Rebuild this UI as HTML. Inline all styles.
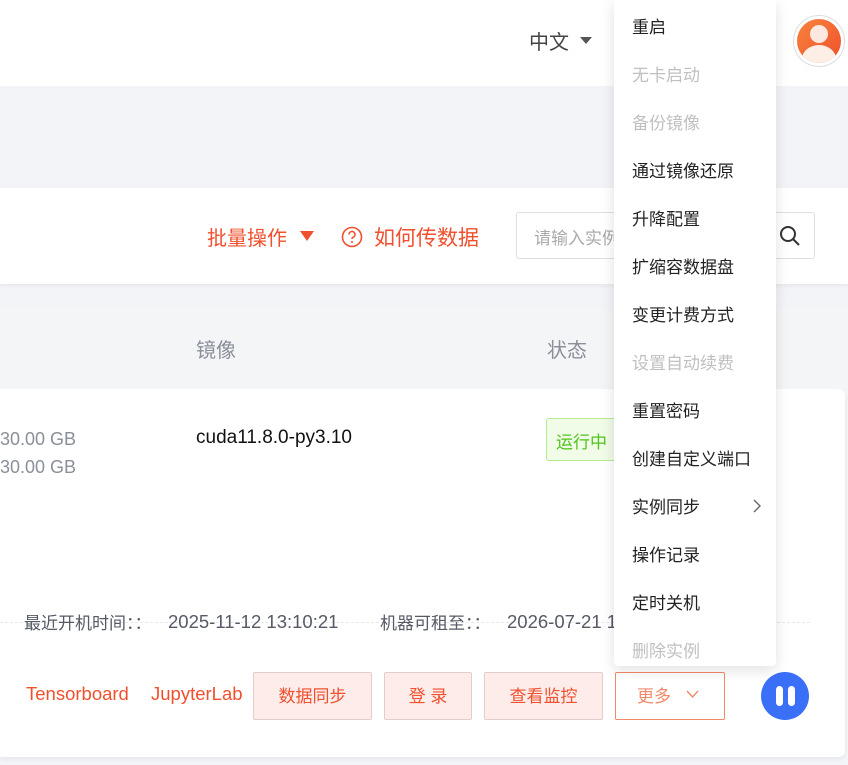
<!DOCTYPE html>
<html><head><meta charset="utf-8"><style>
*{margin:0;padding:0;box-sizing:border-box}
body{width:848px;height:765px;overflow:hidden;background:#f3f4f8;font-family:"Liberation Sans","Noto Sans CJK SC",sans-serif;position:relative;font-size:16px}
.abs{position:absolute}
.hdr{left:0;top:0;width:848px;height:86px;background:#fff}
.card{background:#fff}
.menu{left:614px;top:0;width:162px;height:666px;background:#fff;box-shadow:0 4px 14px rgba(0,0,0,.12);border-radius:0 0 4px 4px}
.mi{position:absolute;left:18px;font-size:17px;color:#222;white-space:nowrap}
.mi.d{color:#c0c0c0}
.btn{position:absolute;top:672px;height:48px;border:1px solid #e5cccc;background:#fdecea;color:#f0502d;font-size:17px;display:flex;align-items:center;justify-content:center;border-radius:2px;padding-bottom:3px}
</style></head><body>
<div class="abs hdr"></div>
<div class="abs" style="left:529px;top:26px;font-size:20px;color:#444">中文</div>
<div class="abs" style="left:580px;top:37px;width:0;height:0;border-left:6px solid transparent;border-right:6px solid transparent;border-top:7px solid #555"></div>
<div class="abs" style="left:793px;top:15px;width:52px;height:52px;border-radius:50%;border:1px solid #ddd;background:#fff"></div>
<div class="abs" style="left:797px;top:19px;width:44px;height:44px;border-radius:50%;background:linear-gradient(135deg,#f7843e,#ef4f2b);overflow:hidden">
<div class="abs" style="left:13px;top:6px;width:18px;height:18px;border-radius:50%;background:#fde8e0"></div>
<div class="abs" style="left:5px;top:26px;width:34px;height:28px;border-radius:50%;background:#fdeee6"></div></div>

<div class="abs card" style="left:0;top:188px;width:848px;height:96px;box-shadow:0 2px 4px rgba(0,0,0,.05)"></div>
<div class="abs" style="left:207px;top:222px;font-size:20px;color:#f0502d">批量操作</div>
<div class="abs" style="left:300px;top:231px;width:0;height:0;border-left:7px solid transparent;border-right:7px solid transparent;border-top:10px solid #f0502d"></div>
<svg class="abs" style="left:341px;top:226px" width="22" height="22" viewBox="0 0 22 22"><circle cx="11" cy="11" r="9.5" fill="none" stroke="#f0502d" stroke-width="1.6"/><path d="M8 8.5a3 3 0 1 1 4 2.8c-.8.4-1 .9-1 1.7" fill="none" stroke="#f0502d" stroke-width="1.6"/><circle cx="11" cy="16" r="1" fill="#f0502d"/></svg>
<div class="abs" style="left:374px;top:222px;font-size:21px;color:#f0502d">如何传数据</div>
<div class="abs" style="left:516px;top:212px;width:299px;height:47px;border:1px solid #dcdfe6;border-radius:3px;background:#fff"></div>
<div class="abs" style="left:534px;top:224px;font-size:17px;color:#aaa">请输入实例</div>
<svg class="abs" style="left:779px;top:225px" width="22" height="22" viewBox="0 0 22 22"><circle cx="9" cy="9" r="7" fill="none" stroke="#333" stroke-width="2"/><path d="M14 14l6 6" stroke="#333" stroke-width="2"/></svg>

<div class="abs" style="left:0;top:308px;width:848px;height:81px;background:#f4f5f7"></div>
<div class="abs" style="left:196px;top:334px;font-size:20px;color:#8a8f99">镜像</div>
<div class="abs" style="left:547px;top:334px;font-size:20px;color:#8a8f99">状态</div>

<div class="abs card" style="left:0;top:389px;width:845px;height:368px;border-radius:0 6px 6px 0;box-shadow:0 2px 4px rgba(0,0,0,.06)"></div>
<div class="abs" style="left:0;top:425px;font-size:18px;color:#8a8f99;line-height:28px">30.00 GB<br>30.00 GB</div>
<div class="abs" style="left:196px;top:427px;font-size:19px;color:#111">cuda11.8.0-py3.10</div>
<div class="abs" style="left:546px;top:418px;width:80px;height:43px;border:1px solid #b7eb8f;background:#f0fbe8;border-radius:3px;color:#52c41a;font-size:17px;padding:9px 0 0 9px">运行中</div>
<div class="abs" style="left:0;top:622px;width:810px;border-top:1px dashed #e8e8e8"></div>
<div class="abs" style="left:24px;top:609px;font-size:17px;color:#555a66;white-space:nowrap">最近开机时间：：</div>
<div class="abs" style="left:168px;top:611px;font-size:18.5px;color:#555a66;white-space:nowrap">2025-11-12 13:10:21</div>
<div class="abs" style="left:380px;top:609px;font-size:17px;color:#555a66;white-space:nowrap">机器可租至：：</div>
<div class="abs" style="left:507px;top:611px;font-size:18.5px;color:#555a66;white-space:nowrap">2026-07-21 1</div>
<div class="abs" style="left:26px;top:683px;font-size:18.5px;color:#f0502d">Tensorboard</div>
<div class="abs" style="left:151px;top:683px;font-size:18.5px;color:#f0502d">JupyterLab</div>
<div class="btn" style="left:253px;width:119px">数据同步</div>
<div class="btn" style="left:384px;width:88px">登 录</div>
<div class="btn" style="left:484px;width:119px">查看监控</div>
<div class="btn" style="left:615px;width:110px;background:#fff;border-color:#f08a6a;color:#f08a6a"></div>
<div class="abs" style="left:761px;top:672px;width:48px;height:48px;border-radius:50%;background:#3a6ff7"></div>
<div class="abs" style="left:776px;top:686px;width:7px;height:20px;background:#fff;border-radius:4px"></div>
<div class="abs" style="left:788px;top:686px;width:7px;height:20px;background:#fff;border-radius:4px"></div>

<div class="abs menu">
<div class="mi" style="top:13px">重启</div>
<div class="mi d" style="top:61px">无卡启动</div>
<div class="mi d" style="top:109px">备份镜像</div>
<div class="mi" style="top:157px">通过镜像还原</div>
<div class="mi" style="top:205px">升降配置</div>
<div class="mi" style="top:253px">扩缩容数据盘</div>
<div class="mi" style="top:301px">变更计费方式</div>
<div class="mi d" style="top:349px">设置自动续费</div>
<div class="mi" style="top:397px">重置密码</div>
<div class="mi" style="top:445px">创建自定义端口</div>
<div class="mi" style="top:493px">实例同步</div>
<svg class="abs" style="left:138px;top:499px" width="10" height="14" viewBox="0 0 10 14"><path d="M2 1l6 6-6 6" fill="none" stroke="#666" stroke-width="1.4"/></svg>
<div class="mi" style="top:541px">操作记录</div>
<div class="mi" style="top:589px">定时关机</div>
<div class="mi d" style="top:637px">删除实例</div>
</div>
<div class="abs" style="left:637px;top:682px;font-size:17px;color:#f08a6a">更多</div>
<svg class="abs" style="left:686px;top:689px" width="13" height="10" viewBox="0 0 13 10"><path d="M1 2l5.5 6 5.5-6" fill="none" stroke="#f08a6a" stroke-width="1.4"/></svg>
</body></html>
